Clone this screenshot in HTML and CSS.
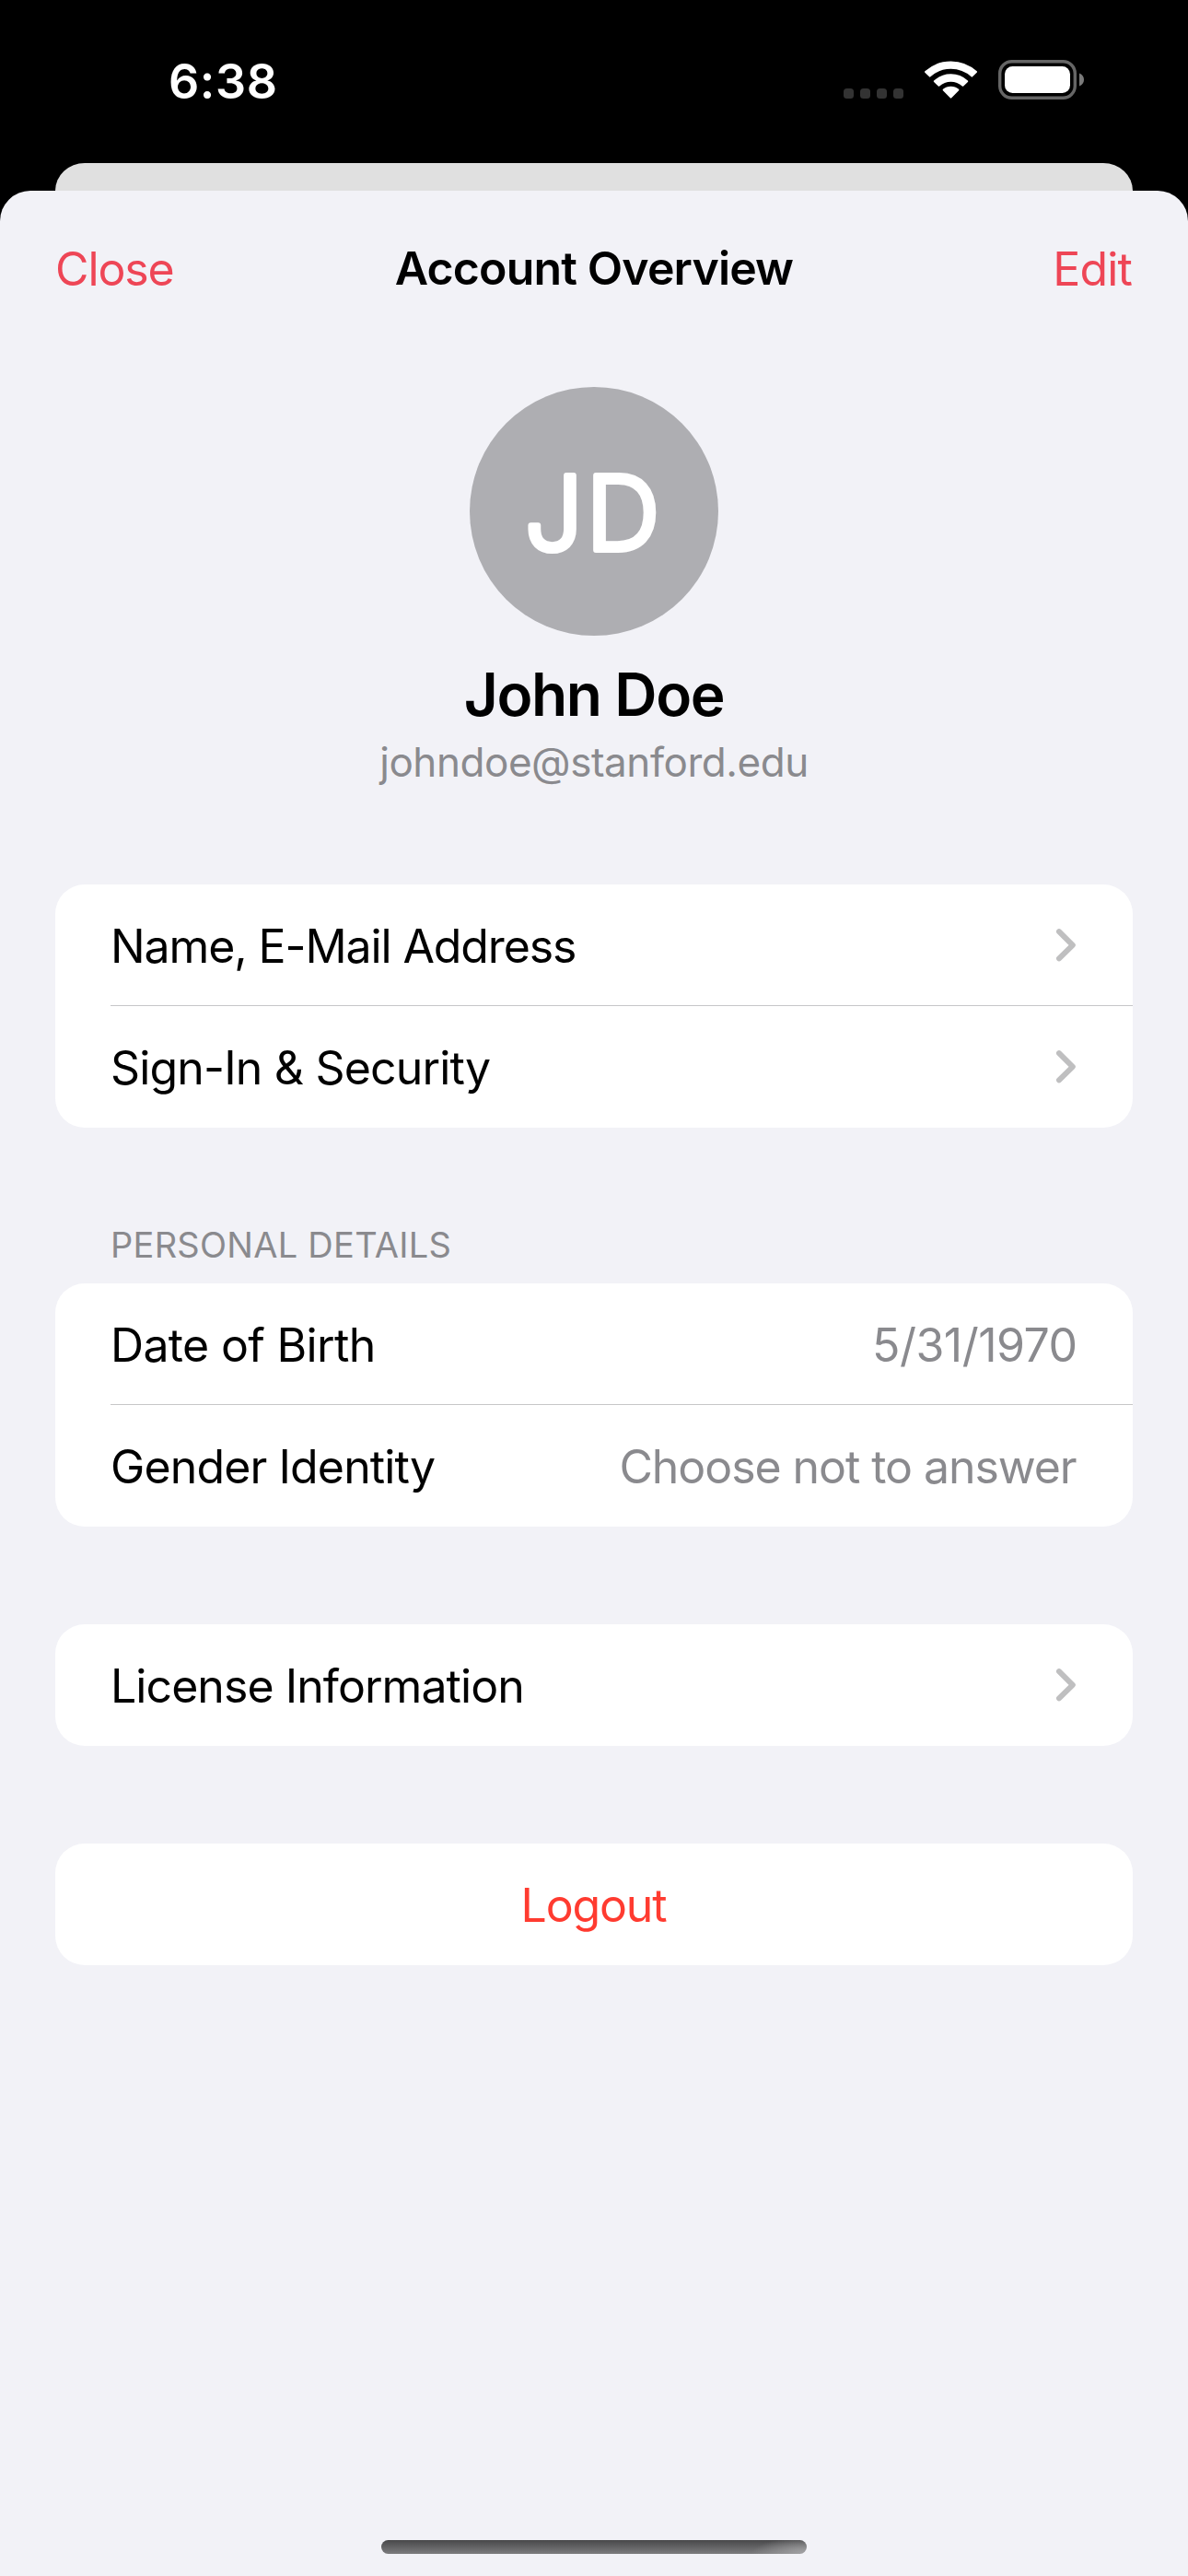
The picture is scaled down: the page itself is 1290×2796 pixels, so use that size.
FILE: index.html
```
<!DOCTYPE html>
<html lang="en">
<head>
<meta charset="utf-8">
<title>Account Overview</title>
<link rel="stylesheet" href="styles.css">
</head>
<body>
<div class="screen">
  <header class="status">
    <span class="time">6:38</span>
    <svg class="indicators" width="261" height="44" viewBox="916 64 261 44" aria-hidden="true">
      <g fill="#333">
        <rect x="916" y="96" width="11" height="11" rx="3.5"/>
        <rect x="934" y="96" width="11" height="11" rx="3.5"/>
        <rect x="952" y="96" width="11" height="11" rx="3.5"/>
        <rect x="970" y="96" width="11" height="11" rx="3.5"/>
      </g>
      <g fill="#fff" stroke="#fff" stroke-width="2" stroke-linejoin="round">
        <path d="M1005 78.1A40.8 40.8 0 0 1 1060 78.1L1055.3 82.6A34 34 0 0 0 1009.7 82.6Z"/>
        <path d="M1014.8 88.3A26 26 0 0 1 1050.2 88.3L1045.5 92.8A19.5 19.5 0 0 0 1019.5 92.8Z"/>
        <path d="M1024.6 97.6A12 12 0 0 1 1040.4 97.6L1032.5 105.6Z"/>
      </g>
      <rect x="1085.7" y="66.7" width="81.6" height="39.6" rx="13" fill="none" stroke="#666" stroke-width="3.4"/>
      <rect x="1091" y="72" width="71" height="29" rx="8.5" fill="#fff"/>
      <path d="M1172 79.5C1175.500 81 1177 83.500 1177 86.500C1177 89.500 1175.500 92 1172 93.500Z" fill="#7a7a7a"/>
    </svg>
  </header>
  <div class="backdrop"></div>
  <main class="sheet">
    <nav class="nav">
      <a class="nav-link close">Close</a>
      <h1 class="title">Account Overview</h1>
      <a class="nav-link edit">Edit</a>
    </nav>
    <section class="profile">
      <svg class="avatar" width="270" height="270" viewBox="0 0 270 270">
        <circle cx="135" cy="135" r="135"/>
        <text class="initials" x="60" y="176.500">JD</text>
      </svg>
      <h2 class="name">John Doe</h2>
      <p class="email">johndoe@stanford.edu</p>
    </section>
    <ul class="group">
      <li class="row"><span class="t-name">Name, E-Mail Address</span>
        <svg class="chevron" width="24" height="38" viewBox="0 0 24 38"><path d="M4 4.200L18.800 18.800L4 33.300"/></svg></li>
      <li class="row"><span class="t-sign">Sign-In &amp; Security</span>
        <svg class="chevron" width="24" height="38" viewBox="0 0 24 38"><path d="M4 4.200L18.800 18.800L4 33.300"/></svg></li>
    </ul>
    <h3 class="caption">PERSONAL DETAILS</h3>
    <ul class="group after-caption">
      <li class="row"><span class="t-birth">Date of Birth</span><span class="value date">5/31/1970</span></li>
      <li class="row"><span class="t-gender">Gender Identity</span><span class="value answer">Choose not to answer</span></li>
    </ul>
    <ul class="group">
      <li class="row"><span class="t-license">License Information</span>
        <svg class="chevron" width="24" height="38" viewBox="0 0 24 38"><path d="M4 4.200L18.800 18.800L4 33.300"/></svg></li>
    </ul>
    <ul class="group">
      <li class="row centered"><span class="logout">Logout</span></li>
    </ul>
    <div class="home"></div>
  </main>
</div>
</body>
</html>
```
FILE: styles.css
```
* { box-sizing: border-box; margin: 0; padding: 0; }
body { background: #000; font-family: Inter, "Liberation Sans", sans-serif; font-size: 50px; color: #000; }
svg { display: block; flex: none; }
ul { list-style: none; }
.screen { width: 1290px; height: 2796px; display: flex; flex-direction: column; overflow: hidden; background: #000; }

.status { height: 177px; padding: 0 113px 0 183px; display: flex; justify-content: space-between; align-items: flex-start; color: #fff; }
.time { margin-top: 59px; line-height: 60px; font-size: 52px; font-weight: 600; letter-spacing: .6px; }
.indicators { margin-top: 64px; }

.backdrop { height: 30px; margin: 0 60px; background: #e0e0e0; border-radius: 32px 32px 0 0 / 30px 30px 0 0; }
.sheet { flex: 1; display: flex; flex-direction: column; padding: 0 60px 24px; background: #f2f2f7; border-radius: 33px 33px 0 0; }

.nav { height: 168px; display: grid; grid-template-columns: 1fr auto 1fr; align-items: center; line-height: 60px; padding-top: 1px; }
.nav-link { color: #ee4656; }
.close { letter-spacing: -1.1px; }
.edit { justify-self: end; padding-right: 1px; letter-spacing: -.83px; }
.title { font-size: 50px; font-weight: 600; letter-spacing: -.85px; padding-bottom: 1px; }

.profile { margin-top: 45px; display: flex; flex-direction: column; align-items: center; }
.avatar { fill: #aeaeb2; }
.initials { font-size: 111px; font-weight: 300; letter-spacing: 3.5px; fill: #fff; stroke: #fff; stroke-width: 6px; stroke-linejoin: round; }
.name { margin-top: 26px; line-height: 76px; font-size: 64px; font-weight: 600; letter-spacing: -1.39px; }
.email { margin-top: 8px; line-height: 54px; font-size: 44px; letter-spacing: -.45px; color: #8a8a8e; }

.group { margin-top: 106px; background: #fff; border-radius: 32px; }
.row { position: relative; height: 132px; padding: 2px 60px 0; display: flex; align-items: center; justify-content: space-between; line-height: 60px; white-space: nowrap; }
.row + .row::before { content: ""; position: absolute; top: -1px; left: 60px; right: 0; height: 1px; background: #c6c6c8; }
.centered { justify-content: center; }
.chevron { fill: none; stroke: #bfbfc0; stroke-width: 6px; stroke-linecap: round; stroke-linejoin: round; margin-top: -2px; }
.caption { margin: 103px 60px 0; line-height: 48px; font-size: 38px; font-weight: 400; letter-spacing: .26px; color: #8a8a8e; }
.after-caption { margin-top: 18px; }

.t-name { letter-spacing: -1.1px; }
.t-sign { letter-spacing: -.83px; }
.t-birth { letter-spacing: -.66px; }
.t-gender { letter-spacing: -.87px; }
.t-license { letter-spacing: -.94px; }
.value { color: #8a8a8e; }
.date { letter-spacing: -.52px; margin-right: .5px; }
.answer { letter-spacing: -1.07px; margin-right: 1.5px; }
.logout { color: #ff3b30; letter-spacing: -1.15px; margin-right: 1px; }

.home { width: 462px; height: 15px; margin: auto auto 0; border-radius: 8px; background: radial-gradient(ellipse 60px 18px at 100% 100%, #a0a0a2 10%, transparent), linear-gradient(#48484a, #7c7c7e); }
```
